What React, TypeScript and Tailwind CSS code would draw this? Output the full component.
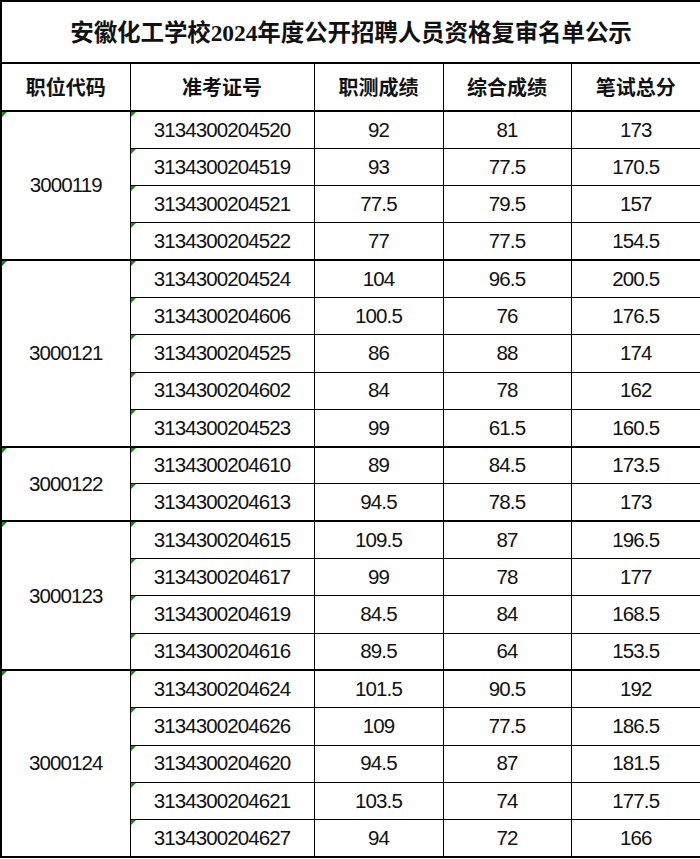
type Row = { id: string; a: string; b: string; total: string };
type Group = { code: string; rows: Row[] };

const groups: Group[] = [
  {
    code: "3000119",
    rows: [
      { id: "3134300204520", a: "92", b: "81", total: "173" },
      { id: "3134300204519", a: "93", b: "77.5", total: "170.5" },
      { id: "3134300204521", a: "77.5", b: "79.5", total: "157" },
      { id: "3134300204522", a: "77", b: "77.5", total: "154.5" },
    ],
  },
  {
    code: "3000121",
    rows: [
      { id: "3134300204524", a: "104", b: "96.5", total: "200.5" },
      { id: "3134300204606", a: "100.5", b: "76", total: "176.5" },
      { id: "3134300204525", a: "86", b: "88", total: "174" },
      { id: "3134300204602", a: "84", b: "78", total: "162" },
      { id: "3134300204523", a: "99", b: "61.5", total: "160.5" },
    ],
  },
  {
    code: "3000122",
    rows: [
      { id: "3134300204610", a: "89", b: "84.5", total: "173.5" },
      { id: "3134300204613", a: "94.5", b: "78.5", total: "173" },
    ],
  },
  {
    code: "3000123",
    rows: [
      { id: "3134300204615", a: "109.5", b: "87", total: "196.5" },
      { id: "3134300204617", a: "99", b: "78", total: "177" },
      { id: "3134300204619", a: "84.5", b: "84", total: "168.5" },
      { id: "3134300204616", a: "89.5", b: "64", total: "153.5" },
    ],
  },
  {
    code: "3000124",
    rows: [
      { id: "3134300204624", a: "101.5", b: "90.5", total: "192" },
      { id: "3134300204626", a: "109", b: "77.5", total: "186.5" },
      { id: "3134300204620", a: "94.5", b: "87", total: "181.5" },
      { id: "3134300204621", a: "103.5", b: "74", total: "177.5" },
      { id: "3134300204627", a: "94", b: "72", total: "166" },
    ],
  },
];

const headers = ["职位代码", "准考证号", "职测成绩", "综合成绩", "笔试总分"];

// little green "number stored as text" marker, like in the spreadsheet
function Flag() {
  return (
    <span className="absolute left-0 top-0 h-0 w-0 border-r-[5px] border-t-[5px] border-r-transparent border-t-[#1a8a1a]" />
  );
}

export default function App() {
  return (
    <div className="h-[859px] w-[700px] bg-white">
      <table className="w-[700px] table-fixed border-collapse border-2 border-black text-[#111]">
        <colgroup>
          <col className="w-[129px]" />
          <col className="w-[184px]" />
          <col className="w-[129px]" />
          <col className="w-[128px]" />
          <col className="w-[130px]" />
        </colgroup>
        <tbody>
          <tr className="h-[62px]">
            <td
              colSpan={5}
              className="border-2 border-black pt-1 text-center font-['Liberation_Serif','Noto_Sans_CJK_SC',serif] text-[23.5px] font-bold tracking-[-0.1px]"
            >
              安徽化工学校2024年度公开招聘人员资格复审名单公示
            </td>
          </tr>
          <tr className="h-[48px]">
            {headers.map((h) => (
              <td
                key={h}
                className="border-[1.5px] border-black text-center font-['Noto_Sans_CJK_SC',serif] text-[20px] font-bold"
              >
                {h}
              </td>
            ))}
          </tr>
          {groups.map((g) =>
            g.rows.map((r, i) => (
              <tr
                key={r.id}
                className="h-[37.3px] font-['Liberation_Sans',sans-serif] text-[20.5px] leading-none tracking-[-0.9px]"
              >
                {i === 0 ? (
                  <td
                    rowSpan={g.rows.length}
                    className="relative border-[1.5px] border-t-2 border-black text-center"
                  >
                    <Flag />
                    {g.code}
                  </td>
                ) : null}
                <td
                  className={`relative border-[1.5px] border-black text-center ${i === 0 ? "border-t-2" : ""}`}
                >
                  <Flag />
                  {r.id}
                </td>
                <td className={`border-[1.5px] border-black text-center ${i === 0 ? "border-t-2" : ""}`}>{r.a}</td>
                <td className={`border-[1.5px] border-black text-center ${i === 0 ? "border-t-2" : ""}`}>{r.b}</td>
                <td className={`border-[1.5px] border-black text-center ${i === 0 ? "border-t-2" : ""}`}>
                  {r.total}
                </td>
              </tr>
            ))
          )}
        </tbody>
      </table>
    </div>
  );
}
